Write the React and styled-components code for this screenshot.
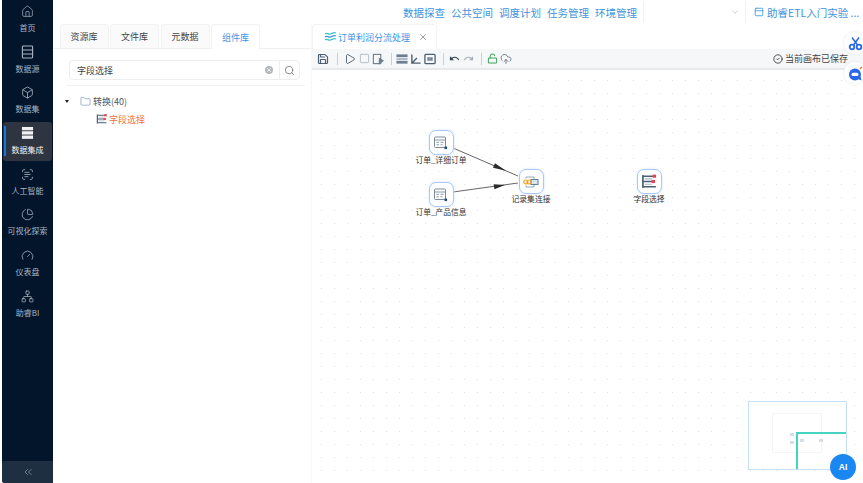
import React from "react";
import styled, { createGlobalStyle } from "styled-components";
import {
  Home,
  Box,
  ScanText,
  ChartPie,
  Gauge,
  Network,
  ChevronsLeft,
  ChevronDown,
  Search,
  Folder,
  X,
  Save,
  Play,
  Square,
  LockOpen,
  CloudUpload,
  CircleCheck,
  PanelTop,
} from "lucide-react";
import { MdUndo, MdRedo } from "react-icons/md";

const FONT = `"Noto Sans CJK SC", "Noto Sans", sans-serif`;

const GlobalStyle = createGlobalStyle`
  html, body { margin: 0; padding: 0; height: 100%; background: #fff; overflow: hidden; }
  body { font-family: ${FONT}; }
  #root { height: 100%; }
  * { box-sizing: border-box; }
`;

const Page = styled.div`
  display: flex;
  width: 863px;
  height: 483px;
  padding-left: 2px;
  background: #fff;
  position: relative;
  overflow: hidden;
`;

const Sidebar = styled.nav`
  width: 51px;
  flex: none;
  display: flex;
  flex-direction: column;
  background: #02152b;
  border-bottom-left-radius: 3px;
  overflow: hidden;
`;

const MenuList = styled.div`
  flex: 1;
  display: flex;
  flex-direction: column;
  align-items: center;
`;

const MenuItem = styled.div`
  position: relative;
  width: 49px;
  height: ${(p) => (p.$active ? "38.7px" : "40.7px")};
  margin-bottom: ${(p) => (p.$active ? "2px" : "0")};
  padding-top: ${(p) => (p.$active ? "4px" : "5px")};
  display: flex;
  flex-direction: column;
  align-items: center;
  gap: ${(p) => (p.$active ? "6px" : "5px")};
  border-radius: 3px;
  background: ${(p) => (p.$active ? "#2f3540" : "transparent")};
  color: ${(p) => (p.$active ? "#f1f3f5" : "#aab4c0")};
  font-size: 8px;
  line-height: 10px;
  &::before {
    content: "";
    display: ${(p) => (p.$active ? "block" : "none")};
    position: absolute;
    left: 1px;
    top: 4px;
    bottom: 5px;
    width: 2px;
    background: #1677d8;
  }
`;

const MenuIcon = styled.span`
  height: 13px;
  display: flex;
  align-items: center;
  justify-content: center;
`;

const Collapse = styled.div`
  height: 22px;
  display: flex;
  align-items: center;
  justify-content: center;
  background: #1e2f42;
  color: #8f9ba8;
`;

const Main = styled.div`
  flex: 1;
  min-width: 0;
  display: flex;
  flex-direction: column;
`;

const TopBar = styled.header`
  height: 24px;
  flex: none;
  display: flex;
  align-items: center;
  justify-content: flex-end;
  font-size: 10.5px;
  color: #3d94dc;
`;

const TopLinks = styled.div`
  display: flex;
  gap: 6px;
  margin-right: 6px;
`;

const ChevronBox = styled.div`
  width: 103px;
  height: 22px;
  display: flex;
  align-items: center;
  justify-content: flex-end;
  padding-right: 5px;
  color: #c3c7cc;
  border-left: 1px solid #eef0f2;
  border-right: 1px solid #eef0f2;
`;

const ProjectName = styled.div`
  width: 117px;
  flex: none;
  padding-left: 8px;
  display: flex;
  align-items: center;
  gap: 3px;
  white-space: nowrap;
  overflow: hidden;
`;

const ProjectIcon = styled(PanelTop)`
  flex: none;
`;

const Workspace = styled.div`
  flex: 1;
  min-height: 0;
  display: flex;
`;

const LeftPanel = styled.aside`
  width: 259px;
  flex: none;
  display: flex;
  flex-direction: column;
  border-right: 1px solid #f8f8f9;
`;

const Tabs = styled.div`
  height: 25px;
  flex: none;
  padding-left: 6.5px;
  display: flex;
  gap: 1.5px;
  border-bottom: 1px solid #f0f0f0;
`;

const Tab = styled.div`
  width: 49px;
  height: ${(p) => (p.$active ? "25px" : "24px")};
  display: flex;
  align-items: center;
  justify-content: center;
  font-size: 9px;
  border: 1px solid #f2f2f2;
  border-bottom: none;
  border-radius: 4px 4px 0 0;
  background: ${(p) => (p.$active ? "#fff" : "#fafafa")};
  color: ${(p) => (p.$active ? "#3d94e8" : "#444")};
`;

const SearchRow = styled.div`
  height: 37px;
  flex: none;
  margin: 0 6px 0 13px;
  padding: 11px 5px 0 3px;
  border-bottom: 1px solid #f2f2f2;
`;

const SearchBox = styled.div`
  height: 20px;
  display: flex;
  align-items: center;
  border: 1px solid #eceef0;
  border-radius: 4px;
  font-size: 9px;
  color: #444;
`;

const SearchText = styled.div`
  flex: 1;
  padding-left: 7px;
`;

const ClearDot = styled.div`
  width: 8px;
  height: 8px;
  margin-right: 6px;
  border-radius: 50%;
  background: #b5b8bb;
  color: #fff;
  display: flex;
  align-items: center;
  justify-content: center;
`;

const SearchButton = styled.div`
  width: 20px;
  height: 100%;
  border-left: 1px solid #eceef0;
  display: flex;
  align-items: center;
  justify-content: center;
  color: #7d8186;
`;

const Tree = styled.div`
  padding: 6px 0 0 12px;
  font-size: 9px;
  color: #555;
`;

const TreeRow = styled.div`
  display: flex;
  align-items: center;
  height: 18px;
  padding-left: ${(p) => p.$indent || 0}px;
`;

const Caret = styled.span`
  width: 0;
  height: 0;
  border-left: 2.5px solid transparent;
  border-right: 2.5px solid transparent;
  border-top: 3px solid #222;
  margin-right: 11px;
`;

const FolderIcon = styled(Folder)`
  color: #5f7a96;
  margin-right: 2px;
`;

const Leaf = styled.span`
  color: #f4703a;
  margin-left: 1px;
`;

const Editor = styled.section`
  flex: 1;
  min-width: 0;
  display: flex;
  flex-direction: column;
`;

const DocTabs = styled.div`
  height: 25px;
  flex: none;
  display: flex;
  background: #fff;
`;

const DocTab = styled.div`
  width: 125px;
  display: flex;
  align-items: center;
  padding-left: 11px;
  gap: 1px;
  font-size: 9px;
  color: #3d94e8;
  border: 1px solid #f4f4f4;
  border-bottom: none;
  border-radius: 4px 4px 0 0;
`;

const DocClose = styled(X)`
  margin-left: 7px;
  color: #8a8d91;
`;

const Toolbar = styled.div`
  height: 21px;
  flex: none;
  display: flex;
  align-items: center;
  padding: 0 15px 0 4px;
  background: #f6f7f8;
  border-bottom: 2px solid #e8e9ea;
  color: #4d6072;
`;

const ToolSlot = styled.span`
  width: 14px;
  flex: none;
  display: flex;
  align-items: center;
  justify-content: center;
`;

const Divider = styled.span`
  width: 1px;
  height: 12px;
  flex: none;
  margin: ${(p) => (p.$first ? "0 5px 0 7px" : "0 3px 0 6px")};
  background: #bcd3e6;
`;

const ToolGlyph = styled.svg`
  width: 12px;
  height: 12px;
  flex: none;
`;

const SaveState = styled.div`
  margin-left: auto;
  display: flex;
  align-items: center;
  gap: 2px;
  font-size: 9px;
  color: #444;
`;

const Canvas = styled.div`
  flex: 1;
  min-height: 0;
  position: relative;
  background-color: #fff;
  background-image: radial-gradient(circle, #e0e1e3 0.6px, transparent 0.9px);
  background-size: 13px 13px;
  background-position: 3px 4px;
`;

const Edges = styled.svg`
  position: absolute;
  inset: 0;
  width: 100%;
  height: 100%;
`;

const Node = styled.div`
  position: absolute;
  left: ${(p) => p.$x}px;
  top: ${(p) => p.$y}px;
  width: 70px;
  display: flex;
  flex-direction: column;
  align-items: center;
  font-size: 7.8px;
  line-height: 9px;
  color: #333;
`;

const NodeBox = styled.div`
  width: 25px;
  height: 25px;
  display: flex;
  align-items: center;
  justify-content: center;
  background: #fff;
  border: 1.5px solid #a8c8f8;
  border-radius: 7px;
  box-shadow: 0 0 3px #d7e6fb;
`;

const FloatButton = styled.div`
  position: absolute;
  right: -3px;
  top: ${(p) => p.$top}px;
  width: 22px;
  height: 22px;
  border-radius: 50%;
  background: #fff;
  box-shadow: 0 0 3px #e3e6ea;
  display: flex;
  align-items: center;
  justify-content: center;
`;

const Minimap = styled.div`
  position: absolute;
  right: 16px;
  bottom: 13px;
  width: 99px;
  height: 69px;
  background: #fff;
  border: 1px solid #c6e0f8;
`;

const MiniPage = styled.div`
  position: absolute;
  left: 23px;
  top: 11px;
  width: 50px;
  height: 40px;
  border: 1px solid #f5f5f5;
`;

const MiniView = styled.div`
  position: absolute;
  left: 47px;
  top: 30px;
  right: 0;
  bottom: 0;
  border-left: 2px solid #45d3c4;
  border-top: 2px solid #45d3c4;
`;

const MiniDot = styled.span`
  position: absolute;
  left: ${(p) => p.$x}px;
  top: ${(p) => p.$y}px;
  width: 4px;
  height: 3px;
  background: #d5dde6;
`;

const AiButton = styled.div`
  position: absolute;
  right: 7px;
  bottom: 3px;
  width: 26px;
  height: 26px;
  border-radius: 50%;
  background: #1b87f2;
  color: #fff;
  font: 700 8.5px "Liberation Sans", sans-serif;
  display: flex;
  align-items: center;
  justify-content: center;
`;

const StackIcon = () => (
  <svg width="13" height="14" viewBox="0 0 14 15" fill="none" stroke="currentColor" strokeWidth="1.2">
    <rect x="1.5" y="1" width="11" height="13" rx="1" />
    <path d="M1.5 5.3h11M1.5 9.7h11" />
  </svg>
);

const ActiveStackIcon = () => (
  <svg width="13" height="14" viewBox="0 0 14 15">
    <rect x="1" y="1" width="12" height="3.6" fill="#eef0f2" />
    <rect x="1" y="5.6" width="12" height="3.6" fill="#eef0f2" />
    <rect x="1" y="10.2" width="12" height="3.6" fill="#eef0f2" />
  </svg>
);

const TableGlyph = () => (
  <svg width="16" height="16" viewBox="0 0 16 16" fill="none">
    <rect x="1.5" y="2" width="11" height="10.5" rx="1" stroke="#6b7f92" strokeWidth="0.9" />
    <path d="M1.5 5h11M3.5 7.3h2.5M7.5 7.3h3M3.5 9.8h2.5M7.5 9.8h2" stroke="#6b7f92" strokeWidth="0.8" />
    <rect x="11.5" y="11.5" width="2.6" height="2.6" fill="#1d4f77" />
  </svg>
);

const JoinGlyph = () => (
  <svg width="18" height="16" viewBox="0 0 18 16" fill="none">
    <path d="M4 4.5V3h8v2M4 11.5V13h8v-2" stroke="#8aa0b3" strokeWidth="0.9" />
    <rect x="9" y="5.5" width="7" height="5" stroke="#5f8199" strokeWidth="1" fill="#d7e6f1" />
    <circle cx="3.8" cy="8" r="2" stroke="#f0a020" strokeWidth="1.2" />
    <circle cx="7" cy="8" r="2" stroke="#f0a020" strokeWidth="1.2" />
  </svg>
);

const FieldGlyph = ({ size = 17 }) => (
  <svg width={size} height={size} viewBox="0 0 16 16" fill="none">
    <rect x="1" y="2" width="1.6" height="12" fill="#48606f" />
    <path d="M2 3h12M2 8h10M2 13h12" stroke="#48606f" strokeWidth="1.5" />
    <path d="M3.500 5.500h7M3.500 10.500h7" stroke="#a9bac7" strokeWidth="1" />
    <rect x="11" y="1.500" width="3.200" height="3" fill="#e8435a" />
    <rect x="10" y="6.500" width="3.200" height="3" fill="#e8435a" />
  </svg>
);

const WaveGlyph = () => (
  <svg width="13" height="12" viewBox="0 0 13 12" fill="none" strokeWidth="1.3">
    <path d="M1 3c2-2 3 1 5.5 0s3.500-2 5.500-1" stroke="#3fc4c0" />
    <path d="M1 6c2-2 3 1 5.500 0s3.500-2 5.500-1" stroke="#3d94e8" />
    <path d="M1 9c2-2 3 1 5.500 0s3.500-2 5.500-1" stroke="#3fc4c0" />
  </svg>
);

const ScissorsGlyph = () => (
  <svg width="15" height="15" viewBox="0 0 15 15" fill="none" stroke="#2a66e8" strokeWidth="1.8">
    <path d="M4 1.500L9.500 9M11 1.500L5.500 9" strokeWidth="1.500" />
    <circle cx="4" cy="11" r="2.300" />
    <circle cx="11" cy="11" r="2.300" />
  </svg>
);

const ChatGlyph = () => (
  <svg width="15" height="15" viewBox="0 0 15 15">
    <circle cx="7" cy="8.500" r="6" fill="#2a66e8" />
    <path d="M10 13l3.500 1.500-1-4z" fill="#2a66e8" />
    <rect x="3.500" y="6.800" width="7" height="3.200" rx="1.600" fill="#fff" />
    <path d="M12 3l2-2" stroke="#f0703a" strokeWidth="1.200" />
  </svg>
);

const menus = [
  { label: "首页", icon: <Home size={13} strokeWidth={1.3} /> },
  { label: "数据源", icon: <StackIcon /> },
  { label: "数据集", icon: <Box size={13} strokeWidth={1.5} /> },
  { label: "数据集成", icon: <ActiveStackIcon />, active: true },
  { label: "人工智能", icon: <ScanText size={13} strokeWidth={1.5} /> },
  { label: "可视化探索", icon: <ChartPie size={13} strokeWidth={1.4} /> },
  { label: "仪表盘", icon: <Gauge size={13} strokeWidth={1.4} /> },
  { label: "助睿BI", icon: <Network size={13} strokeWidth={1.4} /> },
];

const links = ["数据探查", "公共空间", "调度计划", "任务管理", "环境管理"];

const App = () => (
  <>
    <GlobalStyle />
    <Page>
      <Sidebar>
        <MenuList>
          {menus.map((m) => (
            <MenuItem key={m.label} $active={m.active}>
              <MenuIcon>{m.icon}</MenuIcon>
              <span>{m.label}</span>
            </MenuItem>
          ))}
        </MenuList>
        <Collapse>
          <ChevronsLeft size={12} strokeWidth={1.5} />
        </Collapse>
      </Sidebar>
      <Main>
        <TopBar>
          <TopLinks>
            {links.map((l) => (
              <span key={l}>{l}</span>
            ))}
          </TopLinks>
          <ChevronBox>
            <ChevronDown size={10} />
          </ChevronBox>
          <ProjectName>
            <ProjectIcon size={10} />
            助睿ETL入门实验 ...
          </ProjectName>
        </TopBar>
        <Workspace>
          <LeftPanel>
            <Tabs>
              <Tab>资源库</Tab>
              <Tab>文件库</Tab>
              <Tab>元数据</Tab>
              <Tab $active>组件库</Tab>
            </Tabs>
            <SearchRow>
              <SearchBox>
                <SearchText>字段选择</SearchText>
                <ClearDot>
                  <X size={6} strokeWidth={3} />
                </ClearDot>
                <SearchButton>
                  <Search size={11} />
                </SearchButton>
              </SearchBox>
            </SearchRow>
            <Tree>
              <TreeRow>
                <Caret />
                <FolderIcon size={11} strokeWidth={1.2} />
                转换(40)
              </TreeRow>
              <TreeRow $indent={31}>
                <FieldGlyph size={12} />
                <Leaf>字段选择</Leaf>
              </TreeRow>
            </Tree>
          </LeftPanel>
          <Editor>
            <DocTabs>
              <DocTab>
                <WaveGlyph />
                订单利润分流处理
                <DocClose size={10} />
              </DocTab>
            </DocTabs>
            <Toolbar>
              <ToolSlot>
                <Save size={12} strokeWidth={2.4} />
              </ToolSlot>
              <Divider $first />
              <ToolSlot>
                <Play size={12} strokeWidth={1.8} />
              </ToolSlot>
              <ToolSlot>
                <Square size={11} color="#9aa8b4" strokeWidth={1.6} />
              </ToolSlot>
              <ToolSlot>
                <ToolGlyph viewBox="0 0 13 13" fill="none" stroke="#6c7e8f" strokeWidth="1.2">
                  <rect x="1.5" y="1.5" width="8" height="10" />
                  <path d="M8 6l4 2.500L8 11.500z" fill="#6c7e8f" />
                </ToolGlyph>
              </ToolSlot>
              <Divider />
              <ToolSlot>
                <ToolGlyph viewBox="0 0 13 13" fill="#6c7e8f">
                  <rect x="0.500" y="1.500" width="12" height="3" />
                  <rect x="0.500" y="5.500" width="12" height="2" fill="#a9b5c0" />
                  <rect x="0.500" y="8.500" width="12" height="3" />
                </ToolGlyph>
              </ToolSlot>
              <ToolSlot>
                <ToolGlyph viewBox="0 0 13 13" fill="none" stroke="#4d6072" strokeWidth="1.500">
                  <path d="M2 1.500v9.500h9.500M2 11l5.500-5.500" />
                </ToolGlyph>
              </ToolSlot>
              <ToolSlot>
                <ToolGlyph viewBox="0 0 13 13" fill="none" stroke="#4d6072" strokeWidth="1.400">
                  <rect x="1" y="1.500" width="11" height="10" rx="1" />
                  <path d="M4.500 4.500v4M6.500 4.500v4M8.500 4.500v4" />
                </ToolGlyph>
              </ToolSlot>
              <Divider />
              <ToolSlot>
                <MdUndo size={11} color="#34424f" />
              </ToolSlot>
              <ToolSlot>
                <MdRedo size={11} color="#a4adb6" />
              </ToolSlot>
              <Divider />
              <ToolSlot>
                <LockOpen size={11} color="#3fa45b" strokeWidth={2.2} />
              </ToolSlot>
              <ToolSlot>
                <CloudUpload size={12} strokeWidth={1.5} />
              </ToolSlot>
              <SaveState>
                <CircleCheck size={10} color="#333" />
                当前画布已保存
              </SaveState>
            </Toolbar>
            <Canvas>
              <Edges>
                <path d="M141 78 L206 106 M141 122 L206 113" stroke="#666" strokeWidth="1" fill="none" />
                <path d="M181 97.800 L183 93.200 L194 100.700 Z M181.600 114.200 L182.400 119.200 L193 115 Z" fill="#2c2c2c" />
              </Edges>
              <Node $x={94} $y={60}>
                <NodeBox>
                  <TableGlyph />
                </NodeBox>
                <span>订单_详细订单</span>
              </Node>
              <Node $x={94} $y={112}>
                <NodeBox>
                  <TableGlyph />
                </NodeBox>
                <span>订单_产品信息</span>
              </Node>
              <Node $x={184} $y={99}>
                <NodeBox>
                  <JoinGlyph />
                </NodeBox>
                <span>记录集连接</span>
              </Node>
              <Node $x={302} $y={99}>
                <NodeBox>
                  <FieldGlyph />
                </NodeBox>
                <span>字段选择</span>
              </Node>
              <Minimap>
                <MiniPage />
                <MiniDot $x={41} $y={31} />
                <MiniDot $x={41} $y={39} />
                <MiniDot $x={51} $y={37} />
                <MiniDot $x={70} $y={37} />
                <MiniView />
              </Minimap>
              <AiButton>AI</AiButton>
            </Canvas>
          </Editor>
        </Workspace>
      </Main>
      <FloatButton $top={32}>
        <ScissorsGlyph />
      </FloatButton>
      <FloatButton $top={62}>
        <ChatGlyph />
      </FloatButton>
    </Page>
  </>
);

export default App;
